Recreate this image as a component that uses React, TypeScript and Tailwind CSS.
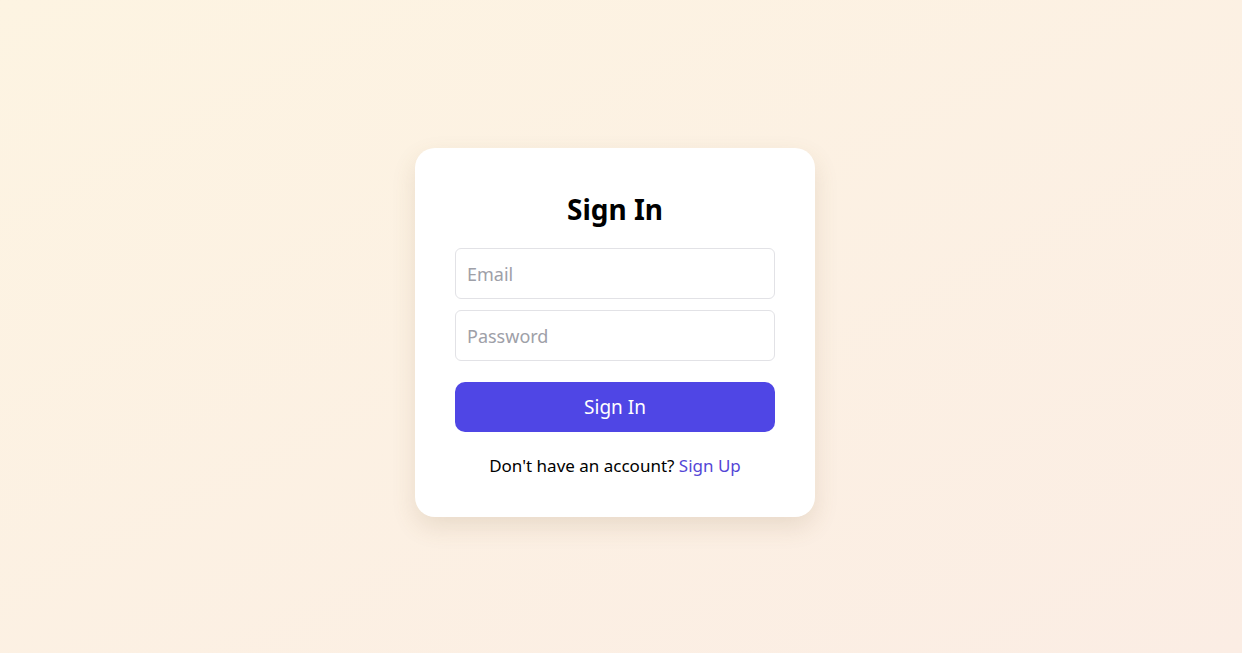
import { useState, type FormEvent } from "react";

export default function App() {
  const [form, setForm] = useState({ email: "", password: "" });

  function handleSubmit(event: FormEvent<HTMLFormElement>) {
    event.preventDefault();
  }

  return (
    <main
      className="flex min-h-screen items-center justify-center bg-gradient-to-br from-[#fdf4e2] to-[#fbede4] pl-6 pr-[36px] pt-[12px]"
      style={{ fontFamily: '"Noto Sans", "Open Sans", sans-serif' }}
    >
      <div className="w-[400px] rounded-[20px] bg-white px-10 pb-[38px] pt-[40px] shadow-[0_10px_24px_rgba(120,90,50,0.14)]">
        <h1 className="text-center text-[28px] font-bold leading-[42px] text-black">Sign In</h1>

        <form onSubmit={handleSubmit} className="mt-[18px]">
          <input
            type="email"
            placeholder="Email"
            value={form.email}
            onChange={(e) => setForm((f) => ({ ...f, email: e.target.value }))}
            className="block h-[51px] w-full rounded-md border border-[#e2e2e6] bg-white px-[11px] text-[18px] text-black outline-none placeholder:text-[#9ea0a8]"
          />
          <input
            type="password"
            placeholder="Password"
            value={form.password}
            onChange={(e) => setForm((f) => ({ ...f, password: e.target.value }))}
            className="mt-[11px] block h-[51px] w-full rounded-md border border-[#e2e2e6] bg-white px-[11px] text-[18px] text-black outline-none placeholder:text-[#9ea0a8]"
          />

          <button
            type="submit"
            className="mt-[21px] block h-[50px] w-full rounded-[10px] bg-[#4f46e5] text-[19px] text-white"
          >
            Sign In
          </button>

          <p className="mt-[20px] text-center text-[17px] leading-[27px] text-black">
            Don't have an account?{" "}
            <a href="#" className="text-[#5446d6]">
              Sign Up
            </a>
          </p>
        </form>
      </div>
    </main>
  );
}
